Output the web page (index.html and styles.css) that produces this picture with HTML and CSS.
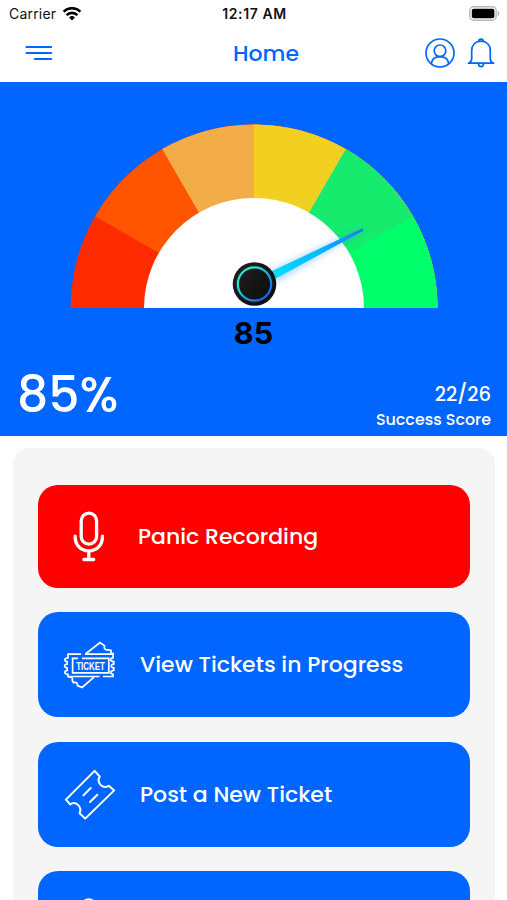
FILE: index.html
```html
<!DOCTYPE html>
<html lang="en">
<head>
    <meta charset="UTF-8">
    <meta name="viewport" content="width=device-width, initial-scale=1.0">
    <title>Home</title>
    <link rel="stylesheet" href="styles.css">
</head>
<body>
    <div class="screen">
        <div class="status-bar">
            <div class="carrier">
                <span>Carrier</span>
                <svg width="20" height="14" viewBox="0 0 20 14" fill="none" stroke="#000" stroke-width="2.6">
                    <path d="M1.6 4.6a12 12 0 0 1 16.8 0"/>
                    <path d="M4.6 8.1a7.7 7.7 0 0 1 10.8 0"/>
                    <path d="M10 13.4L7.1 10.5a4.1 4.1 0 0 1 5.8 0z" fill="#000" stroke="none"/>
                </svg>
            </div>
            <div class="time">12:17 AM</div>
            <svg class="battery" width="31" height="15" viewBox="0 0 31 15">
                <rect x="0.8" y="0.8" width="26.4" height="13.4" rx="4" fill="#fff" stroke="#b8b8b8" stroke-width="1.4"/>
                <rect x="2.8" y="2.8" width="22.6" height="9.4" rx="2" fill="#000"/>
                <path d="M28.7 5v5c2.2-1 2.2-4 0-5z" fill="#b0b0b0"/>
            </svg>
        </div>

        <header class="nav">
            <svg class="menu" width="28" height="16" viewBox="0 0 28 16" stroke="#0066ff" stroke-width="1.9" stroke-linecap="round">
                <path d="M1.4 2h24.8M1.4 8h24.8M9.8 14h16.4"/>
            </svg>
            <h1>Home</h1>
            <div class="nav-icons">
                <svg width="30" height="30" viewBox="0 0 30 30" fill="none" stroke="#0066ff" stroke-width="1.7">
                    <circle cx="15" cy="15" r="14"/>
                    <circle cx="15" cy="12.8" r="5.8"/>
                    <path d="M6.3 25.8c.5-4.4 3.3-7.2 8.7-7.2s8.2 2.8 8.7 7.2"/>
                </svg>
                <svg width="28" height="30" viewBox="0 0 28 30" fill="none" stroke="#0066ff" stroke-width="1.7" stroke-linejoin="round">
                    <path d="M1.4 25.2h25.2c-2.5-.8-3.3-2-3.3-4.4v-8.3c0-5.5-3.8-9.4-9.3-9.4s-9.3 3.9-9.3 9.4v8.3c0 2.4-.8 3.6-3.3 4.4z"/>
                    <path d="M11.7 3.4c0-3.1 4.6-3.1 4.6 0M11.5 25.4c0 4.2 5 4.2 5 0"/>
                </svg>
            </div>
        </header>

        <section class="score">
            <svg class="gauge" width="387" height="194" viewBox="60 116 387 194">
                <defs>
                    <linearGradient id="needle" gradientUnits="userSpaceOnUse" x1="272" y1="276" x2="364" y2="229">
                        <stop offset="0" stop-color="#00e0ff"/>
                        <stop offset="0.5" stop-color="#08b8ff"/>
                        <stop offset="1" stop-color="#1b7cf0"/>
                    </linearGradient>
                    <linearGradient id="ring" x1="0" y1="0" x2="1" y2="1">
                        <stop offset="0.25" stop-color="#28e6cf"/>
                        <stop offset="0.85" stop-color="#1769e8"/>
                    </linearGradient>
                    <linearGradient id="hub" x1="0" y1="0" x2="1" y2="1">
                        <stop offset="0" stop-color="#222"/>
                        <stop offset="1" stop-color="#090909"/>
                    </linearGradient>
                    <filter id="glow" x="-20%" y="-30%" width="140%" height="160%">
                        <feGaussianBlur stdDeviation="3"/>
                    </filter>
                </defs>
                <!-- 30 degree steps around 254,308; each sector runs to the right end so no seams show -->
                <path d="M254 308H70.5A183.5 183.5 0 0 1 437.5 308z" fill="#ff2b00"/>
                <path d="M254 308L95.1 216.2A183.5 183.5 0 0 1 437.5 308z" fill="#ff5500"/>
                <path d="M254 308L162.2 149.1A183.5 183.5 0 0 1 437.5 308z" fill="#f3ad48"/>
                <path d="M254 308V124.5A183.5 183.5 0 0 1 437.5 308z" fill="#f2d022"/>
                <path d="M254 308L345.8 149.1A183.5 183.5 0 0 1 437.5 308z" fill="#17eb6d"/>
                <path d="M254 308L412.9 216.2A183.5 183.5 0 0 1 437.5 308z" fill="#00ff6a"/>
                <path d="M144 308a110 110 0 0 1 220 0z" fill="#fff"/>
                <path d="M269 271L362 227.5L364 230.5L276 283z" fill="#1d8cff" opacity="0.3" filter="url(#glow)"/>
                <path d="M268 273L362 228.5q2 .5 1 2.5L273 280z" fill="url(#needle)"/>
                <circle cx="254.5" cy="284" r="21.8" fill="url(#hub)"/>
                <circle cx="254.5" cy="284" r="16.7" fill="none" stroke="url(#ring)" stroke-width="2.2"/>
            </svg>
            <div class="gauge-value">85</div>
            <div class="score-row">
                <div class="percent">85%</div>
                <div class="score-detail">
                    <div class="fraction">22/26</div>
                    <div class="score-label">Success Score</div>
                </div>
            </div>
        </section>

        <main class="panel">
            <a class="action panic">
                <svg class="icon" width="56" height="56" viewBox="0 0 56 56" fill="none" stroke="#fff" stroke-width="3.3" stroke-linecap="round">
                    <rect x="20.2" y="5.2" width="15.4" height="31" rx="7.7"/>
                    <path d="M14.1 28.2c0 9 5.6 14.7 13.7 14.7s13.7-5.7 13.7-14.7M27.8 43v8.5M22.9 51.5h9.8"/>
                </svg>
                <span>Panic Recording</span>
            </a>
            <a class="action">
                <svg class="icon" width="56" height="56" viewBox="0 0 56 56" fill="none" stroke="#fff" stroke-width="1.7">
                    <path d="M20 17.2H7v3.6c-4 0-4 3.4-.8 3.9v2.4c-3.4.4-3.4 3.4 0 3.8v2.4c-3.2.5-3.2 4 .8 4v2.2h31.5"/>
                    <path d="M24 17.2h28v3.6c-3.2.3-3.2 3.4.8 3.9v2.4c-3.4.4-3.4 3.4 0 3.8v2.4c-4 .5-4 3.7-.8 4v2.2H42"/>
                    <path d="M17 21.3h-5.4v14.6h36.2V21.3H21"/>
                    <path d="M24.5 17L39 5.6l4.6 3.2c-1 2.8.6 4.6 3.2 4l3.2.7c-.6 2 .5 3.2 2.8 3.2"/>
                    <path d="M7.3 40c3.2-.4 4.8 1 4 3.4l1 2.2c2.8-.8 4.4.3 4.2 3l4.6 1.9L33 40.2"/>
                    <text x="15.2" y="32.6" textLength="28.6" lengthAdjust="spacingAndGlyphs" class="ticket-text">TICKET</text>
                </svg>
                <span>View Tickets in Progress</span>
            </a>
            <a class="action">
                <svg class="icon" width="56" height="56" viewBox="0 0 56 56" fill="none" stroke="#fff" stroke-width="2" stroke-linejoin="round" stroke-linecap="round">
                    <path d="M33.6 4.9L4.9 33.6l4.3 4.8c5.3-4.2 12.3 2.5 9.4 8.8l5.6 5.4L53.2 24.4l-5.4-4.6c-6.6 3.6-12.5-3-9.1-9.3z"/>
                    <path d="M22.4 29.4l7.3-7.4M29 36l7.3-7.3"/>
                </svg>
                <span>Post a New Ticket</span>
            </a>
            <a class="action">
                <svg class="icon" width="56" height="56" viewBox="0 0 56 56" fill="none" stroke="#fff" stroke-width="3">
                    <circle cx="27.8" cy="10.2" r="6.5"/>
                    <path d="M12 50V38c0-9 7-14 16.5-14S45 29 45 38v12"/>
                </svg>
            </a>
        </main>
    </div>
</body>
</html>
```

FILE: styles.css
```css
* {
    margin: 0;
    padding: 0;
    box-sizing: border-box;
}

body {
    background: #fff;
    font-family: Poppins, Inter, sans-serif;
    font-weight: 500;
}

.screen {
    width: 507px;
    height: 900px;
    overflow: hidden;
}

.status-bar {
    height: 27px;
    padding: 0 7px 0 9px;
    display: grid;
    grid-template-columns: 1fr auto 1fr;
    align-items: center;
    font-family: Inter, sans-serif;
    font-size: 14px;
    color: #111;
}

.carrier {
    display: flex;
    align-items: center;
    gap: 6px;
    font-weight: 400;
    letter-spacing: 0.2px;
}

.time {
    font-weight: 600;
    letter-spacing: 0.6px;
}

.battery {
    justify-self: end;
}

.nav {
    height: 55px;
    padding: 0 12px 3px 25px;
    display: grid;
    grid-template-columns: 1fr auto 1fr;
    align-items: center;
}

.nav h1 {
    margin-left: 12px;
    font-size: 22px;
    font-weight: 500;
    color: #0066ff;
}

.nav-icons {
    display: flex;
    justify-content: flex-end;
    align-items: center;
    gap: 12px;
}

.score {
    height: 354px;
    padding-top: 34px;
    background: #0066ff;
    color: #fff;
}

.gauge {
    display: block;
    margin: 0 auto;
}

.gauge-value {
    margin-top: 5px;
    line-height: 36px;
    text-align: center;
    font-family: Inter, sans-serif;
    font-size: 30.5px;
    font-weight: 700;
    color: #000;
}

.score-row {
    padding: 14px 16px 0 17px;
    display: flex;
    justify-content: space-between;
}

.percent {
    font-size: 49px;
    line-height: 60px;
}

.score-detail {
    padding-top: 17px;
    text-align: right;
}

.fraction {
    font-size: 19.5px;
    line-height: 26px;
}

.score-label {
    font-size: 15.9px;
    line-height: 24px;
}

.panel {
    margin: 12px 12px 0 13px;
    padding: 37px 25px 0;
    height: 452px;
    border-radius: 16px 16px 0 0;
    background: #f5f5f5;
    display: flex;
    flex-direction: column;
    gap: 24.5px;
}

.action {
    flex: none;
    height: 105px;
    padding-left: 23px;
    display: flex;
    align-items: center;
    gap: 23px;
    border-radius: 20px;
    background: #0066ff;
    color: #fff;
    font-size: 22px;
}

.panic {
    height: 102.5px;
    background: #ff0000;
    gap: 21px;
}

.icon {
    flex: none;
}

.ticket-text {
    fill: #fff;
    stroke: none;
    font-family: "Liberation Sans", sans-serif;
    font-size: 11px;
    font-weight: 700;
}
```
